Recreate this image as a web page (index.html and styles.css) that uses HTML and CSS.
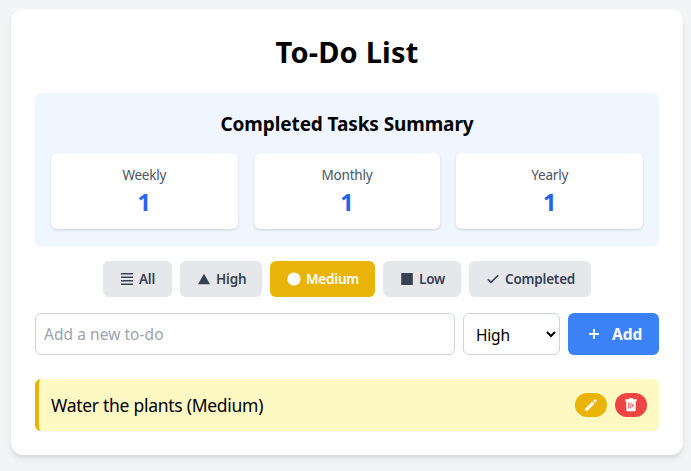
FILE: index.html
```html
<!DOCTYPE html>
<html lang="en">
<head>
<meta charset="utf-8">
<title>To-Do List</title>
<link rel="stylesheet" href="styles.css">
</head>
<body>
<main class="card">
  <h1 class="title">To-Do List</h1>
  <section class="summary">
    <h2 class="summary-title">Completed Tasks Summary</h2>
    <div class="stats">
      <div class="stat"><p class="stat-label">Weekly</p><p class="stat-value">1</p></div>
      <div class="stat"><p class="stat-label">Monthly</p><p class="stat-value">1</p></div>
      <div class="stat"><p class="stat-label">Yearly</p><p class="stat-value">1</p></div>
    </div>
  </section>
  <nav class="filters">
    <button class="filter f-all"><svg width="12" height="12" viewBox="0 0 12 12"><path d="M0 .8h12M0 4.2h12M0 7.7h12M0 11.2h12" stroke="currentColor" stroke-width="1.6"/></svg><span>All</span></button>
    <button class="filter f-high"><svg width="12" height="12" viewBox="0 0 12 12"><path d="M6 .7 12 11.2H0z" fill="currentColor"/></svg><span>High</span></button>
    <button class="filter f-medium active"><svg width="14" height="14" viewBox="0 0 14 14"><circle cx="7" cy="7" r="6.6" fill="currentColor"/></svg><span>Medium</span></button>
    <button class="filter f-low"><svg width="12" height="12" viewBox="0 0 12 12"><path d="M.2 0h11.6v12H.2z" fill="currentColor"/></svg><span>Low</span></button>
    <button class="filter f-completed"><svg width="12" height="12" viewBox="0 0 12 12"><path d="m.8 6.2 3.2 3.2L11.2 2.2" fill="none" stroke="currentColor" stroke-width="1.6"/></svg><span>Completed</span></button>
  </nav>
  <form class="entry">
    <input class="text-input" type="text" placeholder="Add a new to-do">
    <select class="priority"><option>High</option><option>Medium</option><option>Low</option></select>
    <button class="add" type="button"><svg width="10" height="10" viewBox="0 0 10 10"><path d="M5 0v10M0 5h10" stroke="currentColor" stroke-width="1.8"/></svg><span>Add</span></button>
  </form>
  <ul class="list">
    <li class="item">
      <span class="item-text">Water the plants (Medium)</span>
      <span class="actions">
        <button class="action edit" aria-label="Edit"><svg width="12" height="12" viewBox="0 0 12 12"><path d="M.3 9.6 7.3 2.6l2.1 2.1-7 7H.3zM8.2 1.7 9.4.5a.8.8 0 0 1 1.1 0l1 1a.8.8 0 0 1 0 1.1l-1.2 1.2z" fill="currentColor"/></svg></button>
        <button class="action remove" aria-label="Delete"><svg width="12" height="14" viewBox="0 0 12 14"><path fill-rule="evenodd" d="M4 .3h4v1h3.7v2h-1V12a1.3 1.3 0 0 1-1.3 1.3H2.6A1.3 1.3 0 0 1 1.3 12V3.3h-1v-2H4zM3.3 4.6v5.9h1V4.6zm2.1 0v5.9h.9V4.6zm1.9 1.2v3.4l1.2-.8V6.6z" fill="currentColor"/></svg></button>
      </span>
    </li>
  </ul>
</main>
</body>
</html>
```
FILE: styles.css
```css
* { box-sizing: border-box; }
body { margin: 0; padding: 9px 8px 16px 11px; background: #f3f4f6; color: #000; font-family: "Segoe UI", "Noto Sans", "Open Sans", sans-serif; overflow: hidden; }
h1, h2, p, ul { margin: 0; padding: 0; }
button, input, select { font: inherit; }
svg { display: block; flex: none; }
.card { height: 446px; padding: 24px; background: #fff; border-radius: 12px; box-shadow: 0 4px 6px -1px rgba(0,0,0,.1), 0 2px 4px -1px rgba(0,0,0,.06); }
.title { height: 36px; margin-bottom: 24px; text-align: center; font-size: 29px; line-height: 38px; font-weight: 700; letter-spacing: .2px; }
.summary { height: 152px; margin-bottom: 16px; padding: 16px; background: #eff6ff; border-radius: 6px; box-shadow: 0 1px 2px rgba(0,0,0,.05); }
.summary-title { height: 28px; margin-bottom: 16px; text-align: center; font-size: 19px; line-height: 30px; font-weight: 700; letter-spacing: -.1px; }
.stats { display: grid; grid-template-columns: repeat(3, 1fr); gap: 16px; }
.stat { height: 76px; padding: 12px; text-align: center; background: #fff; border-radius: 6px; box-shadow: 0 1px 3px rgba(0,0,0,.1), 0 1px 2px rgba(0,0,0,.06); }
.stat-label { height: 20px; color: #4b5563; font-size: 13.5px; line-height: 20px; letter-spacing: -.2px; }
.stat-value { color: #2563eb; font-size: 23.5px; line-height: 35px; font-weight: 700; }
.filters { display: flex; justify-content: center; gap: 8px; margin-bottom: 16px; }
.filter { display: flex; align-items: center; gap: 6px; height: 36px; padding: 0 0 0 18px; border: 0; border-radius: 6px; background: #e5e7eb; color: #374151; font-size: 13.5px; font-weight: 600; white-space: nowrap; letter-spacing: -.2px; }
.filter.active { background: #eab308; color: #fff; padding-left: 17px; gap: 5px; }
.f-all { width: 69px; }
.f-high { width: 82px; }
.f-medium { width: 105px; }
.f-low { width: 78px; }
.f-completed { width: 122px; }
.entry { display: flex; gap: 8px; height: 42px; margin-bottom: 24px; }
.text-input { flex: 1; min-width: 0; padding: 0 8px; border: 1px solid #d1d5db; border-radius: 6px; background: #fff; font-size: 15.5px; letter-spacing: .05px; }
.text-input::placeholder { color: #9ca3af; }
.priority { width: 97px; padding: 2px 0 0 8px; border: 1px solid #d1d5db; border-radius: 6px; background: #fff; color: #000; font-size: 15.5px; letter-spacing: -.2px; }
.add { display: flex; align-items: center; gap: 13px; width: 91px; padding: 0 0 0 21px; border: 0; border-radius: 6px; background: #3b82f6; color: #fff; font-size: 15.5px; font-weight: 700; }
.list { list-style: none; }
.item { display: flex; align-items: center; justify-content: space-between; height: 52px; padding: 0 12px; background: #fef9c3; border-left: 4px solid #eab308; border-radius: 6px; box-shadow: 0 1px 2px rgba(0,0,0,.05); }
.item-text { font-size: 17.5px; letter-spacing: -.28px; }
.actions { display: flex; gap: 8px; }
.action { display: flex; align-items: center; justify-content: center; width: 32px; height: 24px; padding: 0; border: 0; border-radius: 12px; color: #fff; }
.edit { background: #eab308; }
.remove { background: #ef4444; }
```
